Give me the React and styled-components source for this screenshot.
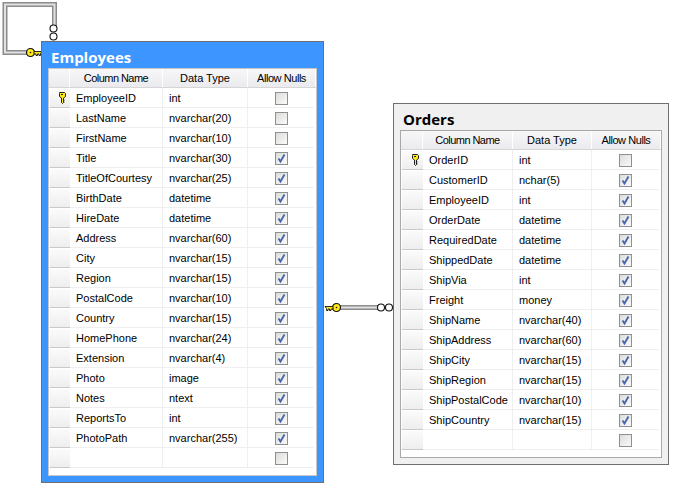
import React from 'react'
import styled, { createGlobalStyle } from 'styled-components'

const employees = [
  ['EmployeeID', 'int', false, true],
  ['LastName', 'nvarchar(20)', false],
  ['FirstName', 'nvarchar(10)', false],
  ['Title', 'nvarchar(30)', true],
  ['TitleOfCourtesy', 'nvarchar(25)', true],
  ['BirthDate', 'datetime', true],
  ['HireDate', 'datetime', true],
  ['Address', 'nvarchar(60)', true],
  ['City', 'nvarchar(15)', true],
  ['Region', 'nvarchar(15)', true],
  ['PostalCode', 'nvarchar(10)', true],
  ['Country', 'nvarchar(15)', true],
  ['HomePhone', 'nvarchar(24)', true],
  ['Extension', 'nvarchar(4)', true],
  ['Photo', 'image', true],
  ['Notes', 'ntext', true],
  ['ReportsTo', 'int', true],
  ['PhotoPath', 'nvarchar(255)', true],
  ['', '', false],
]

const orders = [
  ['OrderID', 'int', false, true],
  ['CustomerID', 'nchar(5)', true],
  ['EmployeeID', 'int', true],
  ['OrderDate', 'datetime', true],
  ['RequiredDate', 'datetime', true],
  ['ShippedDate', 'datetime', true],
  ['ShipVia', 'int', true],
  ['Freight', 'money', true],
  ['ShipName', 'nvarchar(40)', true],
  ['ShipAddress', 'nvarchar(60)', true],
  ['ShipCity', 'nvarchar(15)', true],
  ['ShipRegion', 'nvarchar(15)', true],
  ['ShipPostalCode', 'nvarchar(10)', true],
  ['ShipCountry', 'nvarchar(15)', true],
  ['', '', false],
]

const KeyIcon = () => (
  <svg width="9" height="12" viewBox="0 0 9 12">
    <path d="M1.500 .5h5l1 1v3l-2 1.500v4.500l-1 1-1-1V6l-2-1.500v-3z" fill="#ffe81c" stroke="#222" strokeWidth="1" />
    <path d="M3 2.500h2" stroke="#222" strokeWidth="1" />
    <path d="M5.500 8h1M5.500 10h1" stroke="#222" strokeWidth="1" />
  </svg>
)

const Check = () => (
  <svg width="11" height="11" viewBox="0 0 11 11">
    <path d="M2.500 5.500L4.500 8.500L8.500 1.500" fill="none" stroke="#4463ad" strokeWidth="1.800" />
  </svg>
)

const LinkKey = () => (
  <g>
    <circle cx="12" cy="5" r="4" fill="#ffe81c" stroke="#111" strokeWidth="1.200" />
    <circle cx="12" cy="5" r="0.800" fill="#111" />
    <path d="M0.500 4h8v2.500H6.500V8H5V6.500H3.500V8H2V6z" fill="#ffe81c" stroke="#111" strokeWidth="0.900" />
  </g>
)

const Loop = ({ x, y }) => (
  <circle cx={x} cy={y} r="3.500" fill="#fff" stroke="#111" strokeWidth="1.100" />
)

const DesignTable = ({ title, rows, active, x, y, cols, width }) => (
  <TableBox $active={active} $x={x} $y={y} $width={width}>
    <TableTitle $active={active}>{title}</TableTitle>
    <GridFrame $active={active}>
      <HeadRow $cols={cols}>
        <HeadCell />
        <HeadCell $spacing={-0.55}>Column Name</HeadCell>
        <HeadCell>Data Type</HeadCell>
        <HeadCell $spacing={-0.45}>Allow Nulls</HeadCell>
      </HeadRow>
      {rows.map(([name, type, nulls, key], i) => (
        <Row key={i} $cols={cols}>
          <Selector>{key && <KeyIcon />}</Selector>
          <Cell>{name}</Cell>
          <Cell>{type}</Cell>
          <NullCell>
            <CheckBox>{nulls && <Check />}</CheckBox>
          </NullCell>
        </Row>
      ))}
    </GridFrame>
  </TableBox>
)

const selfLink = 'M27 52.500H5V4.500H54.500V27'
const orderLink = 'M340 307.500H378'

export default function App() {
  return (
    <Diagram>
      <GlobalStyle />
      <Links width="676" height="485">
        <path d={selfLink} fill="none" stroke="#8c8c8c" strokeWidth="5" />
        <path d={selfLink} fill="none" stroke="#e0e0e0" strokeWidth="2" />
        <Loop x={53.5} y={28.5} />
        <Loop x={53.5} y={36.5} />
        <g transform="translate(42.5 47.5) scale(-1 1)"><LinkKey /></g>
        <path d={orderLink} fill="none" stroke="#8c8c8c" strokeWidth="5" />
        <path d={orderLink} fill="none" stroke="#e0e0e0" strokeWidth="2" />
        <g transform="translate(324.5 302.5)"><LinkKey /></g>
        <Loop x={381} y={307.5} />
        <Loop x={389} y={307.5} />
      </Links>
      <DesignTable title="Employees" rows={employees} active x={41} y={41} width={283} cols="21px 93px 85px 1fr" />
      <DesignTable title="Orders" rows={orders} x={393} y={103} width={276} cols="22px 90px 79px 1fr" />
    </Diagram>
  )
}

const GlobalStyle = createGlobalStyle`
  html, body {
    margin: 0;
    padding: 0;
    background: #fff;
  }
`

const Diagram = styled.div`
  position: relative;
  width: 676px;
  height: 485px;
  overflow: hidden;
  font-family: "Liberation Sans", Arial, sans-serif;
  font-size: 11px;
  color: #000;
`

const Links = styled.svg`
  position: absolute;
  left: 0;
  top: 0;
`

const TableBox = styled.div`
  position: absolute;
  left: ${p => p.$x}px;
  top: ${p => p.$y}px;
  width: ${p => p.$width}px;
  box-sizing: border-box;
  border: 1px solid #6f6f6f;
  padding: 0 6px 6px;
  background: ${p => (p.$active ? '#3d95ff' : '#f0f0f0')};
`

const TableTitle = styled.div`
  height: 26px;
  padding: 6px 0 0 3px;
  box-sizing: border-box;
  font-family: "Open Sans", "DejaVu Sans", sans-serif;
  font-weight: 700;
  font-size: 15px;
  line-height: 18px;
  color: ${p => (p.$active ? '#fff' : '#000')};
`

const GridFrame = styled.div`
  border: 1px solid ${p => (p.$active ? '#c7c7c7' : '#a9a9a9')};
  background: #fff;
  padding-bottom: 7px;
`

const HeadRow = styled.div`
  display: grid;
  grid-template-columns: ${p => p.$cols};
  height: 19px;
  background: linear-gradient(#f7f7f8, #ebebef);
  border-bottom: 1px solid #d6d6d6;
  box-sizing: border-box;
`

const HeadCell = styled.div`
  display: flex;
  align-items: center;
  justify-content: center;
  border-right: 1px solid #fff;
  letter-spacing: ${p => p.$spacing || 0}px;
`

const Row = styled.div`
  display: grid;
  grid-template-columns: ${p => p.$cols};
  height: 20px;
  box-sizing: border-box;
  margin-right: 2px;
  border-bottom: 1px solid #efefef;
`

const Selector = styled.div`
  display: flex;
  align-items: center;
  justify-content: center;
  padding-left: 5px;
  margin: 1px 0 -1px 1px;
  background: linear-gradient(#fbfbfb, #eeeeee);
  border-bottom: 1px solid #c9c9c9;
`

const Cell = styled.div`
  display: flex;
  align-items: center;
  padding-left: 6px;
  white-space: nowrap;
  border-right: 1px solid #efefef;
`

const NullCell = styled.div`
  display: flex;
  align-items: center;
  justify-content: center;
`

const CheckBox = styled.div`
  width: 13px;
  height: 13px;
  margin-top: 1px;
  box-sizing: border-box;
  border: 1px solid #8e8f8f;
  background: linear-gradient(135deg, #dcdcd8, #fafafa);
  display: flex;
`
